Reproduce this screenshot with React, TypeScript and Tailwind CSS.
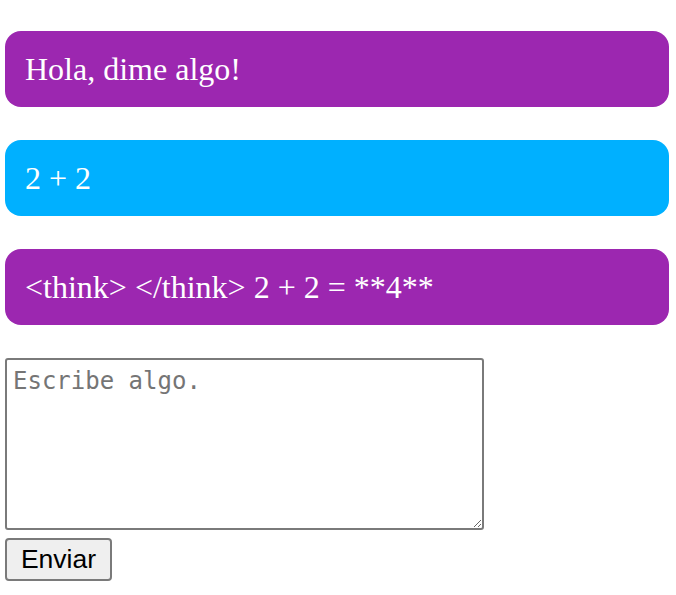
import React from "react";

export default function App() {
  const bubble =
    "w-[664px] rounded-[16px] px-[20px] py-[20px] text-[32px] leading-[36px] text-white";
  return (
    <div className="bg-white w-[676px] h-[595px] pt-[31px] pl-[5px]" style={{ fontFamily: '"Liberation Serif", "Times New Roman", serif' }}>
      <div className="flex flex-col gap-[33px]">
        <div className={`${bubble} bg-[#9c27b0]`}>Hola, dime algo!</div>
        <div className={`${bubble} bg-[#00b0ff]`}>2 + 2</div>
        <div className={`${bubble} bg-[#9c27b0]`}>&lt;think&gt; &lt;/think&gt; 2 + 2 = **4**</div>
      </div>
      <div className="mt-[33px] flex flex-col items-start gap-[8px]">
        <textarea
          placeholder="Escribe algo."
          className="w-[479px] h-[172px] border-2 border-[#7a7a7a] rounded-[3px] px-[6px] pt-[6px] pb-[4px] text-[24px] leading-[30px] placeholder:text-[#757575] resize-y"
          style={{ fontFamily: '"DejaVu Sans Mono", "Liberation Mono", monospace' }}
        />
        <button
          className="h-[43px] w-[107px] bg-[#efefef] border-2 border-[#7a7a7a] rounded-[4px] text-[26.5px] leading-none text-black"
          style={{ fontFamily: '"Liberation Sans", Arial, sans-serif' }}
        >
          Enviar
        </button>
      </div>
    </div>
  );
}
